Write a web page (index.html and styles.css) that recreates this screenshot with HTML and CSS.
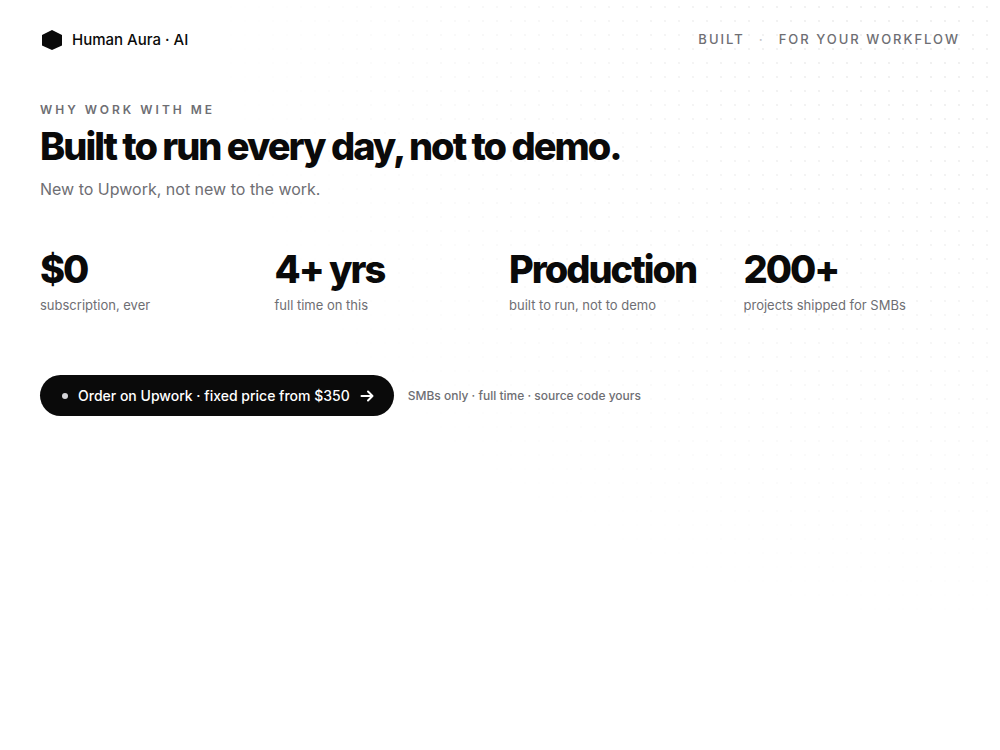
FILE: index.html
```html
<!DOCTYPE html>
<html lang="en">
<head>
<meta charset="utf-8">
<title>Human Aura · AI</title>
<link rel="stylesheet" href="styles.css">
</head>
<body>
<div class="page">
  <header class="top">
    <div class="brand">
      <svg class="mark" viewBox="0 0 24 24" aria-hidden="true"><path d="M12 2l10 5v10.500L12 22 2 17.500V7z"/></svg>
      <span>Human Aura · AI</span>
    </div>
    <div class="tag"><span>Built</span><span class="sep">·</span><span>For your workflow</span></div>
  </header>
  <main>
    <p class="eyebrow">Why work with me</p>
    <h1>Built to run every day, not to demo.</h1>
    <p class="lead">New to Upwork, not new to the work.</p>
    <section class="stats">
      <div><div class="num">$0</div><div class="label">subscription, ever</div></div>
      <div><div class="num">4+ yrs</div><div class="label">full time on this</div></div>
      <div><div class="num">Production</div><div class="label">built to run, not to demo</div></div>
      <div><div class="num">200+</div><div class="label">projects shipped for SMBs</div></div>
    </section>
    <div class="actions">
      <a class="cta" href="#"><span class="dot"></span><span>Order on Upwork · fixed price from $350</span>
        <svg class="arrow" viewBox="0 0 14 14" aria-hidden="true"><path d="M1.500 7h11M8 2.500L12.500 7 8 11.500"/></svg></a>
      <span class="note">SMBs only · full time · source code yours</span>
    </div>
  </main>
</div>
</body>
</html>
```
FILE: styles.css
```css
* { box-sizing: border-box; }
body { margin: 0; background: #fff; color: #0a0a0a; font-family: Inter, "Liberation Sans", sans-serif; }
.page { position: relative; min-height: 100vh; padding: 28px 40px; }
.page::before {
  content: ""; position: absolute; inset: 0; pointer-events: none;
  background-image: radial-gradient(circle, rgba(10, 10, 10, .06) 1px, transparent 1px);
  background-size: 14px 14px;
  -webkit-mask-image: radial-gradient(ellipse 80% 85% at 100% 0, #000 20%, transparent);
  mask-image: radial-gradient(ellipse 80% 85% at 100% 0, #000 20%, transparent);
}
.top, main { position: relative; }
.top { display: flex; justify-content: space-between; align-items: center; height: 24px; line-height: 22px; }
.brand { display: flex; align-items: center; gap: 8px; font-size: 15px; font-weight: 500; }
.mark { width: 24px; height: 24px; fill: #0a0a0a; }
.tag { display: flex; gap: 14px; padding-bottom: 2px; font-size: 13px; font-weight: 500; letter-spacing: 2px; text-transform: uppercase; color: #6e6e73; }
.sep { color: #c4c4c8; }
.eyebrow { margin: 50px 0 0; font-size: 12px; line-height: 16px; font-weight: 600; letter-spacing: 3px; text-transform: uppercase; color: #6e6e73; }
h1 { margin: 8px 0 0; font-size: 38px; line-height: 40px; font-weight: 800; letter-spacing: -2px; }
.lead { margin: 11px 0 0; font-size: 16px; line-height: 24px; color: #6e6e73; }
.stats { display: grid; grid-template-columns: repeat(4, minmax(0, 1fr)); gap: 18px; margin-top: 48px; }
.num { font-size: 38px; line-height: 40px; font-weight: 800; letter-spacing: -2px; white-space: nowrap; }
.label { margin-top: 7px; font-size: 13px; line-height: 18px; color: #6e6e73; }
.actions { display: flex; align-items: center; gap: 14px; margin-top: 61px; }
.cta { display: flex; align-items: center; gap: 10px; height: 41px; padding: 0 20px 0 22px; border-radius: 21px; background: #0a0a0a; color: #fff; font-size: 14px; font-weight: 500; text-decoration: none; }
.dot { width: 6px; height: 6px; border-radius: 50%; background: #d4d4d8; }
.arrow { width: 14px; height: 14px; fill: none; stroke: #fff; stroke-width: 2; stroke-linecap: round; stroke-linejoin: round; }
.note { font-size: 12px; font-weight: 500; color: #6e6e73; }
```
